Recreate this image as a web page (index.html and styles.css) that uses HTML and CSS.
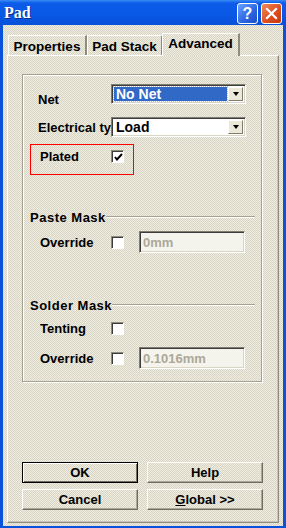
FILE: index.html
```html
<!DOCTYPE html>
<html lang="en">
<head>
  <meta charset="UTF-8">
  <title>Pad</title>
  <link rel="stylesheet" href="styles.css">
</head>
<body>
  <div class="window">
    <!-- title bar -->
    <div class="titlebar">
      <span class="title">Pad</span>
      <div class="title-btns">
        <span class="tbtn help">?</span>
        <span class="tbtn close">
          <svg width="13" height="13" viewBox="0 0 13 13"><path d="M2 2 L11 11 M11 2 L2 11" stroke="#fff" stroke-width="2.2" stroke-linecap="square"/></svg>
        </span>
      </div>
    </div>

    <div class="client">
      <div class="tabs">
        <div class="tab tab-props">Properties</div>
        <div class="tab tab-stack">Pad Stack</div>
        <div class="tab tab-adv active">Advanced</div>
      </div>

      <div class="panel">
        <div class="group">
          <div class="row row-net">
            <span class="label label-low">Net</span>
            <div class="combo">
              <span class="value selected">No Net</span>
              <span class="drop"><span class="arrow"></span></span>
            </div>
          </div>
          <div class="row row-elec">
            <span class="label">Electrical ty</span>
            <div class="combo">
              <span class="value">Load</span>
              <span class="drop"><span class="arrow"></span></span>
            </div>
          </div>
          <div class="plated">
            <span class="label label-plated">Plated</span>
            <span class="check checked">
              <svg width="9" height="8" viewBox="0 0 9 8"><path d="M1 4 L3 6.5 L8 1" stroke="#000" stroke-width="2" fill="none"/></svg>
            </span>
          </div>

          <div class="heading heading-paste">
            <span class="heading-text">Paste Mask</span>
            <span class="heading-line"></span>
          </div>
          <div class="row row-field row-paste">
            <span class="label label-sub">Override</span>
            <span class="check"></span>
            <span class="field">0mm</span>
          </div>

          <div class="heading heading-solder">
            <span class="heading-text">Solder Mask</span>
            <span class="heading-line"></span>
          </div>
          <div class="row row-tent">
            <span class="label label-sub">Tenting</span>
            <span class="check"></span>
          </div>
          <div class="row row-field row-solder">
            <span class="label label-sub">Override</span>
            <span class="check"></span>
            <span class="field">0.1016mm</span>
          </div>
        </div>

        <div class="buttons">
          <button class="btn default">OK</button>
          <button class="btn">Help</button>
          <button class="btn">Cancel</button>
          <button class="btn"><u>G</u>lobal &gt;&gt;</button>
        </div>
      </div>
    </div>
  </div>
</body>
</html>
```

FILE: styles.css
```css
body {
  margin: 0;
  padding: 0;
  font-family: 'Liberation Sans', Arial, sans-serif;
  font-size: 13px;
  font-weight: bold;
  color: #000;
  background: #fff;
}
.window {
  width: 286px;
  height: 528px;
  box-sizing: border-box;
  background: #0a52dc;
  display: flex;
  flex-direction: column;
}

/* title bar */
.titlebar {
  height: 25px;
  flex: none;
  display: flex;
  align-items: flex-start;
  justify-content: space-between;
  background: linear-gradient(#3b8cf5 0, #0c5ce9 3px, #0a58e6 60%, #0850d8 100%);
}
.title {
  font-family: 'Liberation Serif', 'Times New Roman', serif;
  font-size: 16px;
  color: #fff;
  padding: 4px 0 0 4px;
  text-shadow: 1px 1px 0 #0a2a8a;
}
.title-btns {
  display: flex;
  gap: 3px;
  margin: 3px 4px 0 0;
}
.tbtn {
  width: 19px;
  height: 19px;
  border: 1px solid #fff;
  border-radius: 3px;
  display: flex;
  align-items: center;
  justify-content: center;
  color: #fff;
  font-size: 16px;
  font-family: 'Liberation Sans', Arial, sans-serif;
}
.help {
  background: linear-gradient(135deg, #6aa2ff, #2a64e0 60%, #1d4fc4);
}
.close {
  background: linear-gradient(135deg, #f08a5c, #dc4a1c 60%, #c23a10);
}

/* dialog client */
.client {
  flex: 1;
  margin: 0 3px 2px 3px;
  padding-top: 8px;
  background: repeating-conic-gradient(#efece0 0 25%, #d8d5c6 0 50%) 0 0 / 2px 2px;
  display: flex;
  flex-direction: column;
}
.tabs {
  display: flex;
  align-items: flex-end;
  height: 22px;
  margin-left: 5px;
}
.tab {
  height: 20px;
  box-sizing: border-box;
  border-top: 1px solid #fff;
  border-left: 1px solid #fff;
  border-right: 2px solid #8f8c7e;
  display: flex;
  align-items: center;
  justify-content: center;
  padding-top: 1px;
  white-space: nowrap;
  font-size: 13.5px;
}
.tab-props { width: 79px; }
.tab-stack { width: 76px; }
.tab-adv { width: 78px; margin-left: -1px; }
.tab.active {
  height: 23px;
  margin-bottom: -1px;
  position: relative;
  z-index: 1;
  padding-top: 0;
  padding-bottom: 3px;
  background: repeating-conic-gradient(#efece0 0 25%, #d8d5c6 0 50%) 0 0 / 2px 2px;
}

.panel {
  margin-left: 4px;
  width: 272px;
  height: 468px;
  box-sizing: border-box;
  border-top: 1px solid #fff;
  border-left: 1px solid #fff;
  border-right: 1px solid #8f8c7e;
  border-bottom: 1px solid #8f8c7e;
  box-shadow: inset -1px -1px 0 #c8c5b6;
  padding: 18px 0 12px 14px;
  display: flex;
  flex-direction: column;
}

/* group frame */
.group {
  width: 240px;
  height: 308px;
  box-sizing: border-box;
  border: 1px solid #a4a192;
  box-shadow: inset 1px 1px 0 #fff, 1px 1px 0 #fff;
  display: flex;
  flex-direction: column;
}
.row {
  display: flex;
  align-items: center;
  flex: none;
}
.row-net { margin-top: 9px; height: 20px; }
.row-elec { margin-top: 13px; height: 20px; }
.label {
  width: 73px;
  margin-left: 15px;
  overflow: hidden;
  white-space: nowrap;
  flex: none;
}
.label-low { padding-top: 10px; }
.label-sub { width: 71px; margin-left: 17px; }
.label-plated { width: 71px; margin-left: 9px; }

.combo {
  width: 135px;
  height: 20px;
  box-sizing: border-box;
  border-top: 1px solid #7f7d70;
  border-left: 1px solid #7f7d70;
  border-bottom: 1px solid #fff;
  border-right: 1px solid #fff;
  box-shadow: inset 1px 1px 0 #3c3c3c, inset -1px -1px 0 #d8d5c6;
  background: #fff;
  display: flex;
  padding: 2px;
}
.value {
  flex: 1;
  display: flex;
  align-items: center;
  padding-left: 2px;
  font-size: 14px;
}
.value.selected {
  background: #3169c6;
  color: #fff;
  outline: 1px dotted #e8c64a;
}
.drop {
  width: 15px;
  box-sizing: border-box;
  border-top: 1px solid #fff;
  border-left: 1px solid #fff;
  border-right: 1px solid #7f7d70;
  border-bottom: 1px solid #7f7d70;
  background: #ece9d8;
  display: flex;
  align-items: center;
  justify-content: center;
  margin-left: 1px;
}
.arrow {
  width: 0;
  height: 0;
  border-left: 3.5px solid transparent;
  border-right: 3.5px solid transparent;
  border-top: 4px solid #000;
}

/* plated highlight */
.plated {
  margin: 7px 0 0 7px;
  width: 104px;
  height: 31px;
  box-sizing: border-box;
  border: 1px solid #ff0000;
  display: flex;
  align-items: center;
  padding-bottom: 7px;
  flex: none;
}

.check {
  width: 13px;
  height: 13px;
  box-sizing: border-box;
  border-top: 1px solid #8f8c7e;
  border-left: 1px solid #8f8c7e;
  border-bottom: 1px solid #fff;
  border-right: 1px solid #fff;
  box-shadow: inset 1px 1px 0 #3c3c3c;
  background: #fff;
  flex: none;
  display: flex;
  align-items: center;
  justify-content: center;
}
.check svg { margin: 1px 0 0 1px; }

/* section headings */
.heading {
  display: flex;
  align-items: flex-start;
  height: 14px;
  margin-left: 7px;
  margin-right: 6px;
  flex: none;
}
.heading-paste { margin-top: 36px; }
.heading-solder { margin-top: 46px; }
.heading-text {
  line-height: 14px;
  white-space: nowrap;
  letter-spacing: 0.5px;
}
.heading-line {
  flex: 1;
  height: 0;
  margin-top: 5px;
  border-top: 1px solid #a4a192;
  border-bottom: 1px solid #fff;
}

.row-field { height: 22px; }
.row-paste { margin-top: 6px; }
.row-tent { margin-top: 5px; height: 20px; }
.row-solder { margin-top: 9px; }
.field {
  width: 106px;
  height: 22px;
  margin-left: 15px;
  box-sizing: border-box;
  border-top: 1px solid #7f7d70;
  border-left: 1px solid #7f7d70;
  border-bottom: 1px solid #fff;
  border-right: 1px solid #fff;
  box-shadow: inset 1px 1px 0 #3c3c3c, inset -1px -1px 0 #d8d5c6;
  background: #f4f3ec;
  color: #aca899;
  display: flex;
  align-items: center;
  padding-left: 3px;
  font-size: 13px;
}

/* dialog buttons */
.buttons {
  margin-top: auto;
  display: grid;
  grid-template-columns: 116px 116px;
  grid-auto-rows: 21px;
  column-gap: 9px;
  row-gap: 6px;
}
.btn {
  font: bold 13px 'Liberation Sans', Arial, sans-serif;
  color: #000;
  padding: 0;
  background: repeating-conic-gradient(#efece0 0 25%, #d8d5c6 0 50%) 0 0 / 2px 2px;
  border-top: 1px solid #fff;
  border-left: 1px solid #fff;
  border-right: 1px solid #6f6c60;
  border-bottom: 1px solid #6f6c60;
  box-shadow: inset -1px -1px 0 #aca899;
}
.btn.default {
  border: 1px solid #000;
  box-shadow: inset 1px 1px 0 #fff, inset -1px -1px 0 #6f6c60;
}
.btn u { text-decoration: underline; }
```
